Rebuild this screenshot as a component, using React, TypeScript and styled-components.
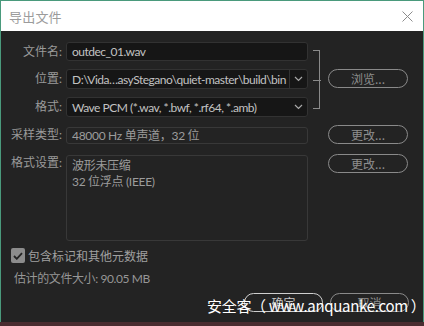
import React from 'react';
import styled, { createGlobalStyle } from 'styled-components';

const GlobalStyle = createGlobalStyle`
  html, body {
    margin: 0;
    padding: 0;
    background: #4a2c30;
    font-family: Lato, 'Noto Sans CJK SC', sans-serif;
  }
`;

const Window = styled.div`
  position: relative;
  width: 424px;
  height: 322px;
  box-sizing: border-box;
  display: flex;
  flex-direction: column;
  border: 1px solid #4a9a7c;
  border-bottom: none;
  background: #232323;
`;

const TitleBar = styled.div`
  height: 30px;
  flex: none;
  background: #ffffff;
  display: flex;
  align-items: center;
  justify-content: space-between;
  padding: 0 10px 0 8px;
`;

const Title = styled.span`
  font-family: 'Noto Sans CJK SC', sans-serif;
  font-size: 13px;
  color: #9b9b9b;
  letter-spacing: 0.2px;
`;

const Body = styled.div`
  flex: 1;
  display: flex;
  flex-direction: column;
  padding: 11px 0 0 0;
`;

const FieldGrid = styled.div`
  display: grid;
  grid-template-columns: 65px 242px 20px 80px;
  grid-template-rows: 19px 20px 20px 19px 89px;
  row-gap: 8px;
`;

const Label = styled.div<{ $row: number; $top?: boolean }>`
  grid-column: 1;
  grid-row: ${(p) => p.$row};
  padding-right: 4px;
  font-size: 12px;
  color: #9a9a9a;
  display: flex;
  justify-content: flex-end;
  align-items: ${(p) => (p.$top ? 'flex-start' : 'center')};
  padding-top: ${(p) => (p.$top ? '3px' : '0')};
  line-height: 16px;
  white-space: nowrap;
`;

const Input = styled.div<{ $row: number }>`
  grid-column: 2;
  grid-row: ${(p) => p.$row};
  box-sizing: border-box;
  background: #161616;
  border: 1px solid #323232;
  border-radius: 3px;
  display: flex;
  align-items: center;
  font-size: 12px;
  letter-spacing: -0.5px;
  color: #c2c2c2;
  overflow: hidden;
  white-space: nowrap;
`;

const InputText = styled.span`
  flex: 1;
  padding-left: 5px;
  overflow: hidden;
`;

const DropButton = styled.span<{ $divided?: boolean }>`
  flex: none;
  width: 17px;
  height: 100%;
  display: flex;
  align-items: center;
  justify-content: center;
  border-left: ${(p) => (p.$divided ? '1px solid #323232' : 'none')};
`;

const Disabled = styled.div<{ $row: number; $offset?: number }>`
  grid-column: 2;
  grid-row: ${(p) => p.$row};
  box-sizing: border-box;
  margin-top: ${(p) => p.$offset ?? 0}px;
  background: #232323;
  border: 1px solid #383838;
  border-radius: 3px;
  font-size: 12px;
  letter-spacing: -0.3px;
  color: #9c9c9c;
  padding: 0 5px;
  line-height: 16px;
`;

const SettingLine = styled.div<{ $first?: boolean }>`
  padding-top: ${(p) => (p.$first ? '2px' : '0')};
`;

const Bracket = styled.div`
  grid-column: 3;
  grid-row: 1 / 4;
  position: relative;
  margin: 8px 8px 8px 5px;
  border: 1.5px solid #8a8a8a;
  border-left: none;
  &::after {
    content: '';
    position: absolute;
    left: 0;
    right: -1.5px;
    top: 50%;
    border-top: 1.5px solid #8a8a8a;
  }
`;

const PillButton = styled.button<{ $bright?: boolean; $offset?: number }>`
  box-sizing: border-box;
  height: 19px;
  margin-top: ${(p) => p.$offset ?? 0}px;
  padding: 0;
  background: transparent;
  border: 1.5px solid ${(p) => (p.$bright ? '#cfcfcf' : '#8a8a8a')};
  border-radius: 10px;
  font-family: 'Noto Sans CJK SC', sans-serif;
  font-size: 12px;
  line-height: 15px;
  color: ${(p) => (p.$bright ? '#c8c8c8' : '#8e8e8e')};
`;

const SideButton = styled(PillButton)<{ $row: number }>`
  grid-column: 4;
  grid-row: ${(p) => p.$row};
  width: 80px;
  align-self: start;
`;

const CheckRow = styled.div`
  height: 15px;
  display: flex;
  align-items: center;
  gap: 3px;
  margin: 7px 0 0 10px;
  font-size: 12px;
  color: #a0a0a0;
`;

const Box = styled.span`
  width: 14px;
  height: 15px;
  border-radius: 2px;
  background: #8c8c8c;
  display: flex;
  align-items: center;
  justify-content: center;
`;

const SizeText = styled.div`
  margin: 8px 0 0 13px;
  font-size: 12px;
  letter-spacing: -0.4px;
  line-height: 16px;
  color: #969696;
`;

const Footer = styled.div`
  display: flex;
  justify-content: flex-end;
  gap: 7px;
  margin: 6px 14px 0 0;
`;

const FooterButton = styled(PillButton)`
  width: 79px;
`;

const Watermark = styled.div`
  position: absolute;
  left: 206px;
  top: 294px;
  font-family: 'Noto Sans CJK SC', sans-serif;
  font-size: 15px;
  letter-spacing: -0.3px;
  color: #ffffff;
  white-space: nowrap;
`;

const Chevron = () => (
  <svg width="9" height="6" viewBox="0 0 9 6">
    <path d="M1 1l3.5 3.5L8 1" fill="none" stroke="#a8a8a8" strokeWidth="1.2" />
  </svg>
);

export default function App() {
  return (
    <>
      <GlobalStyle />
      <Window>
        <TitleBar>
          <Title>导出文件</Title>
          <svg width="11" height="11" viewBox="0 0 11 11">
            <path d="M0.5 0.5l10 10M10.5 0.5l-10 10" stroke="#8c8c8c" strokeWidth="1" />
          </svg>
        </TitleBar>
        <Body>
          <FieldGrid>
            <Label $row={1}>文件名:</Label>
            <Input $row={1}>
              <InputText>outdec_01.wav</InputText>
            </Input>

            <Label $row={2}>位置:</Label>
            <Input $row={2}>
              <InputText>D:\Vida…asyStegano\quiet-master\build\bin</InputText>
              <DropButton $divided>
                <Chevron />
              </DropButton>
            </Input>

            <Label $row={3}>格式:</Label>
            <Input $row={3}>
              <InputText>Wave PCM (*.wav, *.bwf, *.rf64, *.amb)</InputText>
              <DropButton>
                <Chevron />
              </DropButton>
            </Input>

            <Bracket />
            <SideButton $row={2}>浏览...</SideButton>

            <Label $row={4}>采样类型:</Label>
            <Disabled $row={4} $offset={2}>
              48000 Hz 单声道，32 位
            </Disabled>
            <SideButton $row={4}>更改...</SideButton>

            <Label $row={5} $top>
              格式设置:
            </Label>
            <Disabled $row={5} $offset={3}>
              <SettingLine $first>波形未压缩</SettingLine>
              <SettingLine>32 位浮点 (IEEE)</SettingLine>
            </Disabled>
            <SideButton $row={5} $offset={2}>
              更改...
            </SideButton>
          </FieldGrid>

          <CheckRow>
            <Box>
              <svg width="10" height="8" viewBox="0 0 10 8">
                <path d="M1 4l2.8 2.8L9 1.2" fill="none" stroke="#232323" strokeWidth="1.8" />
              </svg>
            </Box>
            包含标记和其他元数据
          </CheckRow>
          <SizeText>估计的文件大小: 90.05 MB</SizeText>

          <Footer>
            <FooterButton $bright>确定</FooterButton>
            <FooterButton>取消</FooterButton>
          </Footer>
        </Body>
        <Watermark>安全客（ www.anquanke.com ）</Watermark>
      </Window>
    </>
  );
}
